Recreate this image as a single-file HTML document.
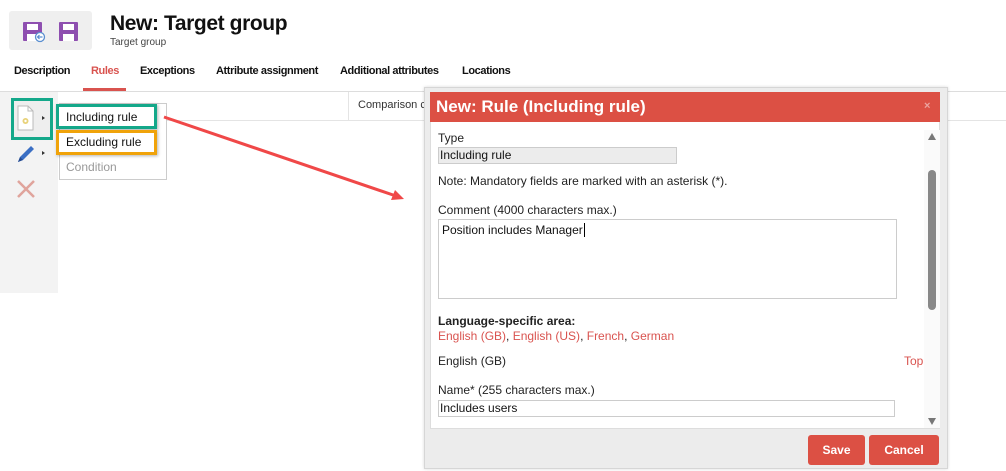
<!DOCTYPE html>
<html><head><meta charset="utf-8"><style>
*{margin:0;padding:0;box-sizing:border-box}
body{width:1006px;height:471px;position:relative;overflow:hidden;background:#fff;font-family:"Liberation Sans",sans-serif;color:#111;font-size:12px}
.abs{position:absolute}
.tab{position:absolute;top:65px;font-size:11px;font-weight:bold;letter-spacing:-0.4px}
.lbl{position:absolute;left:438px;font-size:12px;color:#222}
.red{color:#d9534f}
.btn{position:absolute;top:435px;height:30px;background:#dc5044;color:#fff;font-weight:bold;font-size:12px;text-align:center;line-height:30px;border-radius:3px}
</style></head><body>
<div class="abs" style="left:9px;top:11px;width:83px;height:39px;background:#efefef;border-radius:3px"></div>
<svg class="abs" style="left:22px;top:21px" width="26" height="22" viewBox="0 0 26 22"><rect x="1" y="1" width="19" height="19" rx="1" fill="#8e4fb0"/><rect x="5" y="3" width="11" height="6" fill="#fff"/><rect x="5" y="13" width="11" height="7" fill="#fff"/><circle cx="18" cy="16" r="4.5" fill="#fff" stroke="#5a8fd0" stroke-width="1.3"/><path d="M15.5 16h5M17.5 14l-2 2 2 2" stroke="#5a8fd0" stroke-width="1.2" fill="none"/></svg>
<svg class="abs" style="left:58px;top:21px" width="21" height="21" viewBox="0 0 21 21"><rect x="1" y="1" width="19" height="19" rx="1" fill="#8e4fb0"/><rect x="5" y="3" width="11" height="6" fill="#fff"/><rect x="5" y="13" width="11" height="7" fill="#fff"/></svg>
<div class="abs" style="left:110px;top:12px;font-size:21px;font-weight:bold;letter-spacing:-0.4px">New: Target group</div>
<div class="abs" style="left:110px;top:37px;font-size:10px;color:#444">Target group</div>
<div class="tab" style="left:14px">Description</div>
<div class="tab red" style="left:91px">Rules</div>
<div class="tab" style="left:140px">Exceptions</div>
<div class="tab" style="left:216px">Attribute assignment</div>
<div class="tab" style="left:340px">Additional attributes</div>
<div class="tab" style="left:462px">Locations</div>
<div class="abs" style="left:83px;top:88px;width:43px;height:3px;background:#d9534f"></div>
<div class="abs" style="left:0;top:91px;width:1006px;height:1px;background:#ddd"></div>
<div class="abs" style="left:58px;top:120px;width:948px;height:1px;background:#e4e4e4"></div>
<div class="abs" style="left:348px;top:92px;width:1px;height:28px;background:#e4e4e4"></div>
<div class="abs" style="left:358px;top:99px;font-size:11px;color:#333">Comparison c</div>
<div class="abs" style="left:0;top:92px;width:58px;height:201px;background:#f3f3f3"></div>
<div class="abs" style="left:11px;top:98px;width:42px;height:42px;border:3px solid #14a88a;background:#eee"></div>
<svg class="abs" style="left:16px;top:104px" width="20" height="28" viewBox="0 0 20 28"><path d="M2 2h10l5 5v19H2z" fill="#fff" stroke="#bbb"/><path d="M12 2v5h5" fill="none" stroke="#bbb"/><circle cx="9.5" cy="17" r="3" fill="#e8d27a"/><circle cx="9.5" cy="17" r="1.2" fill="#fff"/></svg>
<div class="abs" style="left:42px;top:116px;border-left:3px solid #333;border-top:2.5px solid transparent;border-bottom:2.5px solid transparent"></div>
<svg class="abs" style="left:15px;top:143px" width="22" height="22" viewBox="0 0 22 22"><path d="M3 19l2-5 11-11 3 3-11 11z" fill="#3b6fc4"/><path d="M3 19l2-5 3 3z" fill="#244a90"/></svg>
<div class="abs" style="left:42px;top:151px;border-left:3px solid #333;border-top:2.5px solid transparent;border-bottom:2.5px solid transparent"></div>
<svg class="abs" style="left:15px;top:178px" width="22" height="22" viewBox="0 0 22 22"><path d="M3 3l16 16M19 3L3 19" stroke="#e0a49c" stroke-width="2.5"/></svg>
<div class="abs" style="left:59px;top:103px;width:108px;height:77px;border:1px solid #ccc;background:#fff"></div>
<div class="abs" style="left:56px;top:104px;width:101px;height:25px;border:3px solid #14a88a;background:#fff;box-shadow:1px 1px 3px rgba(0,0,0,.3)"></div>
<div class="abs" style="left:66px;top:110px;font-size:12px">Including rule</div>
<div class="abs" style="left:56px;top:130px;width:101px;height:25px;border:3px solid #f0a30a;background:#fff;box-shadow:1px 1px 3px rgba(0,0,0,.3)"></div>
<div class="abs" style="left:66px;top:135px;font-size:12px">Excluding rule</div>
<div class="abs" style="left:66px;top:160px;font-size:12px;color:#999">Condition</div>
<div class="abs" style="left:424px;top:87px;width:524px;height:382px;background:#ececec;border:1px solid #d6d6d6;box-shadow:0 0 3px rgba(0,0,0,.15)"></div>
<div class="abs" style="left:430px;top:92px;width:510px;height:30px;background:#dc5044"></div>
<div class="abs" style="left:436px;top:97px;color:#fff;font-size:17px;font-weight:bold">New: Rule (Including rule)</div>
<div class="abs" style="left:924px;top:100px;color:#eba49f;font-size:11px;font-weight:bold">×</div>
<div class="abs" style="left:430px;top:122px;width:510px;height:307px;background:#fff;border:1px solid #ddd;border-top:none"></div>
<div class="abs" style="left:924px;top:130px;width:16px;height:298px;background:#fafafa"></div>
<div class="abs" style="left:928px;top:133px;border-bottom:7px solid #777;border-left:4.5px solid transparent;border-right:4.5px solid transparent"></div>
<div class="abs" style="left:928px;top:170px;width:8px;height:140px;background:#888;border-radius:4px"></div>
<div class="abs" style="left:928px;top:418px;border-top:7px solid #777;border-left:4.5px solid transparent;border-right:4.5px solid transparent"></div>
<div class="lbl" style="top:131px">Type</div>
<div class="abs" style="left:438px;top:147px;width:239px;height:17px;background:#ececec;border:1px solid #ccc;padding-left:1px;font-size:12px;line-height:15px">Including rule</div>
<div class="lbl" style="top:174px">Note: Mandatory fields are marked with an asterisk (*).</div>
<div class="lbl" style="top:203px">Comment (4000 characters max.)</div>
<div class="abs" style="left:438px;top:219px;width:459px;height:80px;border:1px solid #ccc;padding:3px 3px;font-size:12px">Position includes Manager<span style="border-left:1px solid #000;margin-left:1px"></span></div>
<div class="lbl" style="top:314px;font-weight:bold">Language-specific area:</div>
<div class="lbl" style="top:329px"><span class="red">English (GB)</span>, <span class="red">English (US)</span>, <span class="red">French</span>, <span class="red">German</span></div>
<div class="lbl" style="top:354px">English (GB)</div>
<div class="abs red" style="left:904px;top:354px;font-size:12px">Top</div>
<div class="lbl" style="top:383px">Name* (255 characters max.)</div>
<div class="abs" style="left:438px;top:400px;width:457px;height:17px;border:1px solid #ccc;padding-left:1px;font-size:12px;line-height:15px">Includes users</div>
<div class="btn" style="left:808px;width:57px">Save</div>
<div class="btn" style="left:869px;width:70px">Cancel</div>
<svg class="abs" style="left:0;top:0" width="1006" height="471"><line x1="164" y1="117" x2="396" y2="196" stroke="#f04848" stroke-width="3"/><path d="M404 199l-13 1 4-10z" fill="#f04848"/></svg>
</body></html>
